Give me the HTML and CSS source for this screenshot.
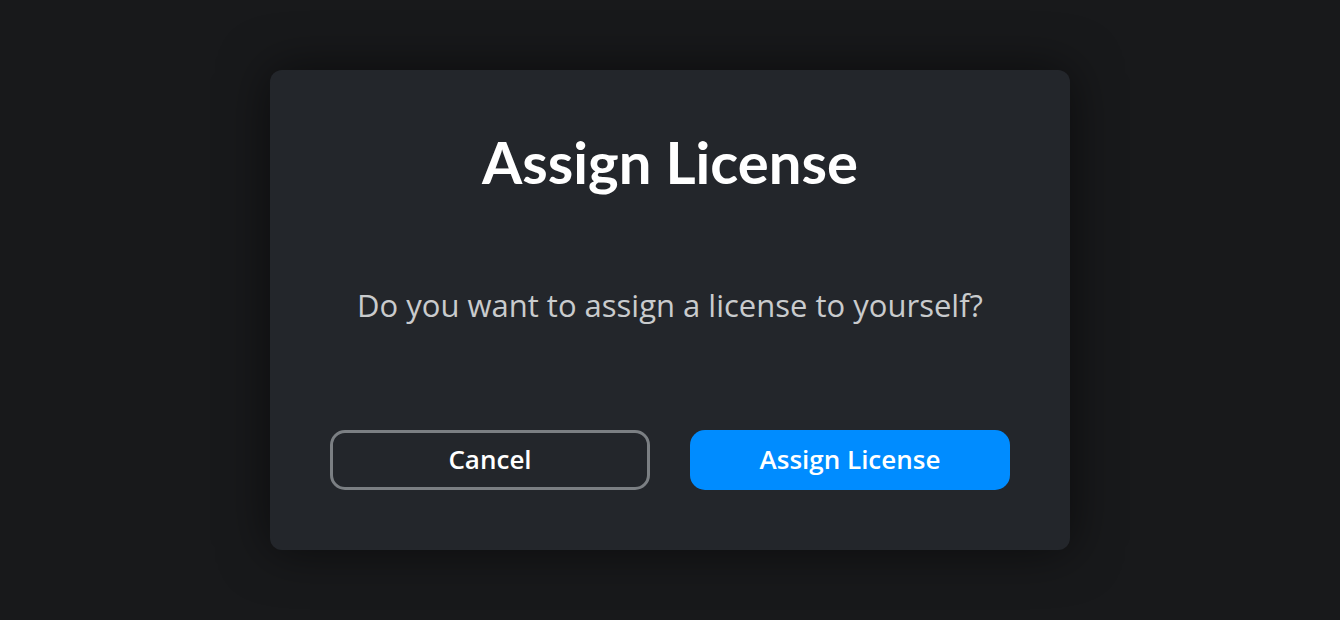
FILE: index.html
```html
<!DOCTYPE html>
<html lang="en">
<head>
<meta charset="utf-8">
<title>Assign License</title>
<link rel="stylesheet" href="styles.css">
</head>
<body>
<div class="overlay">
  <div class="modal" role="dialog" aria-labelledby="modal-title">
    <h1 class="modal-title" id="modal-title">Assign License</h1>
    <p class="modal-text">Do you want to assign a license to yourself?</p>
    <div class="modal-actions">
      <button class="btn btn-secondary" type="button">Cancel</button>
      <button class="btn btn-primary" type="button">Assign License</button>
    </div>
  </div>
</div>
</body>
</html>
```
FILE: styles.css
```css
* { box-sizing: border-box; }
html, body { margin: 0; padding: 0; }
body {
  background: #18191b;
  font-family: "Open Sans", "Noto Sans", sans-serif;
  width: 1340px;
  height: 620px;
  overflow: hidden;
}
.overlay {
  height: 620px;
  display: flex;
  align-items: center;
  justify-content: center;
}
.modal {
  width: 800px;
  height: 480px;
  background: #23262b;
  border-radius: 12px;
  box-shadow: 0 0 50px rgba(0, 0, 0, 0.55);
  padding: 60px;
  display: flex;
  flex-direction: column;
  align-items: stretch;
}
.modal-title {
  margin: 0;
  text-align: center;
  font-family: "Lato", "Open Sans", sans-serif;
  font-weight: 700;
  font-size: 58px;
  line-height: 64px;
  color: #ffffff;
}
.modal-text {
  margin: 0;
  margin-top: 91px;
  text-align: center;
  font-size: 31px;
  line-height: 40px;
  color: #c9cbcd;
}
.modal-actions {
  margin-top: auto;
  display: grid;
  grid-template-columns: 1fr 1fr;
  gap: 40px;
}
.btn {
  height: 60px;
  border-radius: 15px;
  font-family: "Open Sans", sans-serif;
  font-weight: 600;
  font-size: 26px;
  line-height: 1;
  color: #ffffff;
  cursor: pointer;
  padding: 0 0 3px;
}
.btn-secondary {
  background: transparent;
  border: 3px solid #7b7f83;
}
.btn-primary {
  background: #008cff;
  border: none;
}
```
